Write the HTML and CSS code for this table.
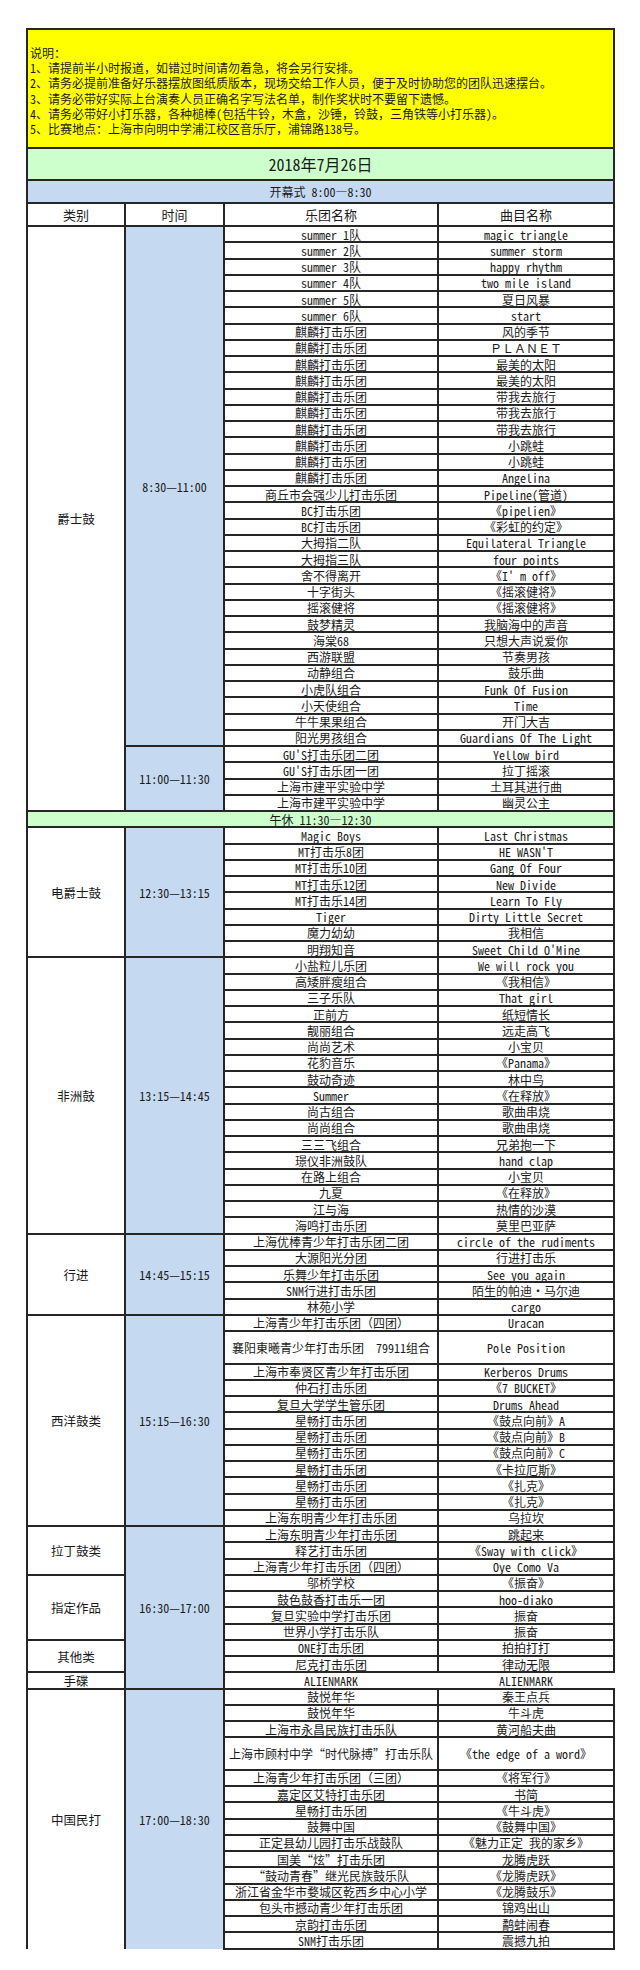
FILE: index.html
```html
<!DOCTYPE html>
<html lang="zh-CN">
<head>
<meta charset="utf-8">
<title>2018年7月26日 比赛安排</title>
<link rel="stylesheet" href="styles.css">
</head>
<body>
<table class="sheet">
<colgroup><col class="c-cat"><col class="c-time"><col class="c-band"><col class="c-song"></colgroup>
<tbody>
<tr class="notes"><td colspan="4">
<div>说明：</div>
<div>1、请提前半小时报道，如错过时间请勿着急，将会另行安排。</div>
<div>2、请务必提前准备好乐器摆放图纸质版本，现场交给工作人员，便于及时协助您的团队迅速摆台。</div>
<div>3、请务必带好实际上台演奏人员正确名字写法名单，制作奖状时不要留下遗憾。</div>
<div>4、请务必带好小打乐器，各种槌棒(包括牛铃，木盒，沙锤，铃鼓，三角铁等小打乐器)。</div>
<div>5、比赛地点：上海市向明中学浦江校区音乐厅，浦锦路138号。</div>
</td></tr>
<tr class="date"><td colspan="4">2018年7月26日</td></tr>
<tr class="open"><td colspan="4">开幕式 8:00—8:30</td></tr>
<tr class="head"><td>类别</td><td>时间</td><td>乐团名称</td><td>曲目名称</td></tr>

<tr class="r"><td class="cat" rowspan="36">爵士鼓</td><td class="time" rowspan="32">8:30—11:00</td><td>summer 1队</td><td>magic triangle</td></tr>
<tr class="r"><td>summer 2队</td><td>summer storm</td></tr>
<tr class="r"><td>summer 3队</td><td>happy rhythm</td></tr>
<tr class="r"><td>summer 4队</td><td>two mile island</td></tr>
<tr class="r"><td>summer 5队</td><td>夏日风暴</td></tr>
<tr class="r"><td>summer 6队</td><td>start</td></tr>
<tr class="r"><td>麒麟打击乐团</td><td>风的季节</td></tr>
<tr class="r"><td>麒麟打击乐团</td><td>ＰＬＡＮＥＴ</td></tr>
<tr class="r"><td>麒麟打击乐团</td><td>最美的太阳</td></tr>
<tr class="r"><td>麒麟打击乐团</td><td>最美的太阳</td></tr>
<tr class="r"><td>麒麟打击乐团</td><td>带我去旅行</td></tr>
<tr class="r"><td>麒麟打击乐团</td><td>带我去旅行</td></tr>
<tr class="r"><td>麒麟打击乐团</td><td>带我去旅行</td></tr>
<tr class="r"><td>麒麟打击乐团</td><td>小跳蛙</td></tr>
<tr class="r"><td>麒麟打击乐团</td><td>小跳蛙</td></tr>
<tr class="r"><td>麒麟打击乐团</td><td>Angelina</td></tr>
<tr class="r"><td>商丘市会强少儿打击乐团</td><td>Pipeline(管道)</td></tr>
<tr class="r"><td>BC打击乐团</td><td>《pipelien》</td></tr>
<tr class="r"><td>BC打击乐团</td><td>《彩虹的约定》</td></tr>
<tr class="r"><td>大拇指二队</td><td>Equilateral Triangle</td></tr>
<tr class="r"><td>大拇指三队</td><td>four points</td></tr>
<tr class="r"><td>舍不得离开</td><td>《I' m off》</td></tr>
<tr class="r"><td>十字街头</td><td>《摇滚健将》</td></tr>
<tr class="r"><td>摇滚健将</td><td>《摇滚健将》</td></tr>
<tr class="r"><td>鼓梦精灵</td><td>我脑海中的声音</td></tr>
<tr class="r"><td>海棠68</td><td>只想大声说爱你</td></tr>
<tr class="r"><td>西游联盟</td><td>节奏男孩</td></tr>
<tr class="r"><td>动静组合</td><td>鼓乐曲</td></tr>
<tr class="r"><td>小虎队组合</td><td>Funk Of Fusion</td></tr>
<tr class="r"><td>小天使组合</td><td>Time</td></tr>
<tr class="r"><td>牛牛果果组合</td><td>开门大吉</td></tr>
<tr class="r"><td>阳光男孩组合</td><td>Guardians Of The Light</td></tr>
<tr class="r"><td class="time" rowspan="4">11:00—11:30</td><td>GU'S打击乐团二团</td><td>Yellow bird</td></tr>
<tr class="r"><td>GU'S打击乐团一团</td><td>拉丁摇滚</td></tr>
<tr class="r"><td>上海市建平实验中学</td><td>土耳其进行曲</td></tr>
<tr class="r"><td>上海市建平实验中学</td><td>幽灵公主</td></tr>

<tr class="r break"><td colspan="4">午休 11:30—12:30</td></tr>

<tr class="r"><td class="cat" rowspan="8">电爵士鼓</td><td class="time" rowspan="8">12:30—13:15</td><td>Magic Boys</td><td>Last Christmas</td></tr>
<tr class="r"><td>MT打击乐8团</td><td>HE WASN'T</td></tr>
<tr class="r"><td>MT打击乐10团</td><td>Gang Of Four</td></tr>
<tr class="r"><td>MT打击乐12团</td><td>New Divide</td></tr>
<tr class="r"><td>MT打击乐14团</td><td>Learn To Fly</td></tr>
<tr class="r"><td>Tiger</td><td>Dirty Little Secret</td></tr>
<tr class="r"><td>魔力幼幼</td><td>我相信</td></tr>
<tr class="r"><td>明翔知音</td><td>Sweet Child O'Mine</td></tr>

<tr class="r"><td class="cat" rowspan="17">非洲鼓</td><td class="time" rowspan="17">13:15—14:45</td><td>小盐粒儿乐团</td><td>We will rock you</td></tr>
<tr class="r"><td>高矮胖瘦组合</td><td>《我相信》</td></tr>
<tr class="r"><td>三子乐队</td><td>That girl</td></tr>
<tr class="r"><td>正前方</td><td>纸短情长</td></tr>
<tr class="r"><td>靓丽组合</td><td>远走高飞</td></tr>
<tr class="r"><td>尚尚艺术</td><td>小宝贝</td></tr>
<tr class="r"><td>花豹音乐</td><td>《Panama》</td></tr>
<tr class="r"><td>鼓动奇迹</td><td>林中鸟</td></tr>
<tr class="r"><td>Summer</td><td>《在释放》</td></tr>
<tr class="r"><td>尚古组合</td><td>歌曲串烧</td></tr>
<tr class="r"><td>尚尚组合</td><td>歌曲串烧</td></tr>
<tr class="r"><td>三三飞组合</td><td>兄弟抱一下</td></tr>
<tr class="r"><td>璟仪非洲鼓队</td><td>hand clap</td></tr>
<tr class="r"><td>在路上组合</td><td>小宝贝</td></tr>
<tr class="r"><td>九夏</td><td>《在释放》</td></tr>
<tr class="r"><td>江与海</td><td>热情的沙漠</td></tr>
<tr class="r"><td>海鸣打击乐团</td><td>莫里巴亚萨</td></tr>

<tr class="r"><td class="cat" rowspan="5">行进</td><td class="time" rowspan="5">14:45—15:15</td><td>上海优棒青少年打击乐团二团</td><td>circle of the rudiments</td></tr>
<tr class="r"><td>大源阳光分团</td><td>行进打击乐</td></tr>
<tr class="r"><td>乐舞少年打击乐团</td><td>See you again</td></tr>
<tr class="r"><td>SNM行进打击乐团</td><td>陌生的帕迪·马尔迪</td></tr>
<tr class="r"><td>林苑小学</td><td>cargo</td></tr>

<tr class="r"><td class="cat" rowspan="12">西洋鼓类</td><td class="time" rowspan="12">15:15—16:30</td><td>上海青少年打击乐团（四团）</td><td>Uracan</td></tr>
<tr class="r2"><td>襄阳東曦青少年打击乐团　79911组合</td><td>Pole Position</td></tr>
<tr class="r"><td>上海市奉贤区青少年打击乐团</td><td>Kerberos Drums</td></tr>
<tr class="r"><td>仲石打击乐团</td><td>《7 BUCKET》</td></tr>
<tr class="r"><td>复旦大学学生管乐团</td><td>Drums Ahead</td></tr>
<tr class="r"><td>星畅打击乐团</td><td>《鼓点向前》A</td></tr>
<tr class="r"><td>星畅打击乐团</td><td>《鼓点向前》B</td></tr>
<tr class="r"><td>星畅打击乐团</td><td>《鼓点向前》C</td></tr>
<tr class="r"><td>星畅打击乐团</td><td>《卡拉厄斯》</td></tr>
<tr class="r"><td>星畅打击乐团</td><td>《扎克》</td></tr>
<tr class="r"><td>星畅打击乐团</td><td>《扎克》</td></tr>
<tr class="r"><td>上海东明青少年打击乐团</td><td>乌拉坎</td></tr>

<tr class="r"><td class="cat" rowspan="3">拉丁鼓类</td><td class="time" rowspan="10">16:30—17:00</td><td>上海东明青少年打击乐团</td><td>跳起来</td></tr>
<tr class="r"><td>释艺打击乐团</td><td>《Sway with click》</td></tr>
<tr class="r"><td>上海青少年打击乐团（四团）</td><td>Oye Como Va</td></tr>
<tr class="r"><td class="cat" rowspan="4">指定作品</td><td>邬桥学校</td><td>《振奋》</td></tr>
<tr class="r"><td>鼓色鼓香打击乐一团</td><td>hoo-diako</td></tr>
<tr class="r"><td>复旦实验中学打击乐团</td><td>振奋</td></tr>
<tr class="r"><td>世界小学打击乐队</td><td>振奋</td></tr>
<tr class="r"><td class="cat" rowspan="2">其他类</td><td>ONE打击乐团</td><td>拍拍打打</td></tr>
<tr class="r"><td>尼克打击乐团</td><td>律动无限</td></tr>
<tr class="r plain"><td class="cat">手碟</td><td>ALIENMARK</td><td>ALIENMARK</td></tr>

<tr class="r"><td class="cat last" rowspan="15">中国民打</td><td class="time last" rowspan="15">17:00—18:30</td><td>鼓悦年华</td><td>秦王点兵</td></tr>
<tr class="r"><td>鼓悦年华</td><td>牛斗虎</td></tr>
<tr class="r"><td>上海市永昌民族打击乐队</td><td>黄河船夫曲</td></tr>
<tr class="r2"><td>上海市顾村中学“时代脉搏”打击乐队</td><td>《the edge of a word》</td></tr>
<tr class="r"><td>上海青少年打击乐团（三团）</td><td>《将军行》</td></tr>
<tr class="r"><td>嘉定区艾特打击乐团</td><td>书简</td></tr>
<tr class="r"><td>星畅打击乐团</td><td>《牛斗虎》</td></tr>
<tr class="r"><td>鼓舞中国</td><td>《鼓舞中国》</td></tr>
<tr class="r"><td>正定县幼儿园打击乐战鼓队</td><td>《魅力正定 我的家乡》</td></tr>
<tr class="r"><td>国美“炫”打击乐团</td><td>龙腾虎跃</td></tr>
<tr class="r"><td>“鼓动青春”继光民族鼓乐队</td><td>《龙腾虎跃》</td></tr>
<tr class="r"><td>浙江省金华市婺城区乾西乡中心小学</td><td>《龙腾鼓乐》</td></tr>
<tr class="r"><td>包头市撼动青少年打击乐团</td><td>锦鸡出山</td></tr>
<tr class="r"><td>京韵打击乐团</td><td>鹬蚌闹春</td></tr>
<tr class="r"><td>SNM打击乐团</td><td>震撼九拍</td></tr>
</tbody>
</table>
</body>
</html>
```

FILE: styles.css
```css
html, body {
  margin: 0;
  padding: 0;
  background: #ffffff;
}

body {
  font-family: "Noto Sans Mono CJK SC", "Liberation Mono", "Noto Sans CJK SC", monospace;
  font-size: 12px;
  color: #1a1a1a;
}

.sheet {
  margin: 28px 0 0 26px;
  width: 587px;
  table-layout: fixed;
  border-collapse: collapse;
}

.c-cat { width: 98px; }
.c-time { width: 99px; }
.c-band { width: 214px; }
.c-song { width: 176px; }

.sheet td {
  border: 2px solid #262626;
  padding: 0 1px;
  text-align: center;
  vertical-align: middle;
  white-space: nowrap;
  overflow: hidden;
  line-height: 13px;
}

.notes { height: 119px; }
.notes td {
  background: #ffff00;
  text-align: left;
  vertical-align: top;
  padding: 15px 2px 0;
  line-height: 15.2px;
  font-size: 12px;
}

.date { height: 32px; }
.date td {
  background: #ccffcc;
  font-size: 16px;
  line-height: 18px;
}

.open { height: 23px; }
.open td {
  background: #c5d9f1;
}

.head { height: 23px; }
.head td {
  font-size: 13px;
}

.r { height: 16.25px; }
.r2 { height: 32.5px; }

.sheet .cat {
  background: #ffffff;
  font-size: 12.5px;
}

.sheet .time {
  background: #c5d9f1;
  font-size: 12px;
}

.break td {
  background: #ccffcc;
}

.plain td {
  border-left-color: transparent;
  border-right-color: transparent;
}

.sheet .plain .cat {
  border-left-color: #262626;
  border-right-color: #262626;
}

.sheet .last {
  border-bottom: none;
}
```
